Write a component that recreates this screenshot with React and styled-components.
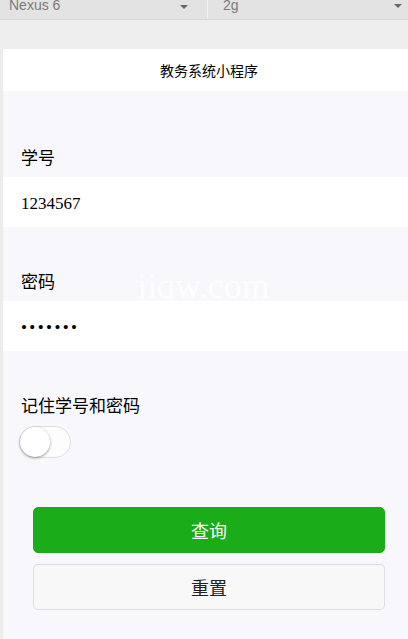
import React from "react";
import styled, { createGlobalStyle } from "styled-components";

const Global = createGlobalStyle`
  html, body { margin: 0; padding: 0; }
  body {
    width: 408px;
    height: 639px;
    overflow: hidden;
    background: #ececec;
    font-family: "Noto Sans CJK SC", "Noto Sans", sans-serif;
  }
`;

const Page = styled.div`
  position: relative;
  width: 408px;
  height: 639px;
  overflow: hidden;
  display: flex;
  flex-direction: column;
`;

const DeviceBar = styled.div`
  display: flex;
  height: 19px;
  background: #e3e3e3;
  border-bottom: 1px solid #d6d6d6;
  flex-shrink: 0;
`;

const DeviceCell = styled.div`
  display: flex;
  align-items: flex-start;
  justify-content: space-between;
  box-sizing: border-box;
  width: ${(p) => p.$w}px;
  padding: 0 ${(p) => p.$pr}px 0 ${(p) => p.$pl}px;
  border-right: ${(p) => (p.$divider ? "1px solid #f2f2f2" : "none")};
  font-family: "Liberation Sans", Arial, sans-serif;
  font-size: 14px;
  line-height: 11px;
  color: #7a7a7a;
`;

const Caret = styled.span`
  width: 0;
  height: 0;
  margin-top: ${(p) => p.$top}px;
  border-left: 4px solid transparent;
  border-right: 4px solid transparent;
  border-top: 4px solid #666;
`;

const Gap = styled.div`
  height: 29px;
  background: #eeeeee;
  flex-shrink: 0;
`;

const Phone = styled.div`
  margin-left: 3px;
  width: 412px;
  flex: 1;
  background: #f8f7fc;
  display: flex;
  flex-direction: column;
`;

const Header = styled.div`
  height: 42px;
  background: #ffffff;
  display: flex;
  align-items: center;
  justify-content: center;
  font-size: 14px;
  color: #000;
`;

const Label = styled.div`
  padding: ${(p) => p.$top}px 18px 8px;
  font-size: 17px;
  line-height: 24px;
  color: #000;
`;

const InputRow = styled.div`
  height: 50px;
  box-sizing: border-box;
  padding: 3px 18px 0;
  background: #ffffff;
  display: flex;
  align-items: center;
  font-family: "Liberation Serif", "Times New Roman", serif;
  font-size: 17px;
  color: #000;
  letter-spacing: ${(p) => (p.$secret ? "2.4px" : "0")};
`;

const SwitchWrap = styled.div`
  padding: 1px 16px 0;
`;

const SwitchTrack = styled.div`
  position: relative;
  width: 52px;
  height: 32px;
  box-sizing: border-box;
  border: 1px solid #dfdfdf;
  border-radius: 16px;
  background: #fdfdfd;
`;

const SwitchKnob = styled.div`
  position: absolute;
  left: 0;
  top: 0;
  width: 30px;
  height: 30px;
  border-radius: 50%;
  background: #fff;
  box-shadow: 0 1px 3px rgba(0, 0, 0, 0.4);
`;

const Buttons = styled.div`
  display: flex;
  flex-direction: column;
  gap: 11px;
  padding: 49px 30px 0;
`;

const Button = styled.div`
  height: 46px;
  box-sizing: border-box;
  border-radius: 5px;
  display: flex;
  align-items: center;
  justify-content: center;
  font-size: 18px;
  background: ${(p) => (p.$primary ? "#1aad19" : "#f8f8f8")};
  color: ${(p) => (p.$primary ? "#ffffff" : "#222222")};
  border: 1px solid ${(p) => (p.$primary ? "#1aad19" : "rgba(0,0,0,0.1)")};
`;

const Watermark = styled.div`
  position: absolute;
  left: 137px;
  top: 268px;
  font-family: "Liberation Serif", "Times New Roman", serif;
  font-size: 36px;
  line-height: 36px;
  color: rgba(255, 255, 255, 0.85);
  pointer-events: none;
`;

export default function App() {
  return (
    <>
      <Global />
      <Page>
        <DeviceBar>
          <DeviceCell $w={208} $pl={9} $pr={19} $divider>
            <span>Nexus 6</span>
            <Caret $top={5} />
          </DeviceCell>
          <DeviceCell $w={200} $pl={15} $pr={6}>
            <span>2g</span>
            <Caret $top={4} />
          </DeviceCell>
        </DeviceBar>
        <Gap />
        <Phone>
          <Header>教务系统小程序</Header>
          <Label $top={54}>学号</Label>
          <InputRow>1234567</InputRow>
          <Label $top={42}>密码</Label>
          <InputRow $secret>•••••••</InputRow>
          <Label $top={42}>记住学号和密码</Label>
          <SwitchWrap>
            <SwitchTrack>
              <SwitchKnob />
            </SwitchTrack>
          </SwitchWrap>
          <Buttons>
            <Button $primary>查询</Button>
            <Button>重置</Button>
          </Buttons>
        </Phone>
        <Watermark>jiqw.com</Watermark>
      </Page>
    </>
  );
}
